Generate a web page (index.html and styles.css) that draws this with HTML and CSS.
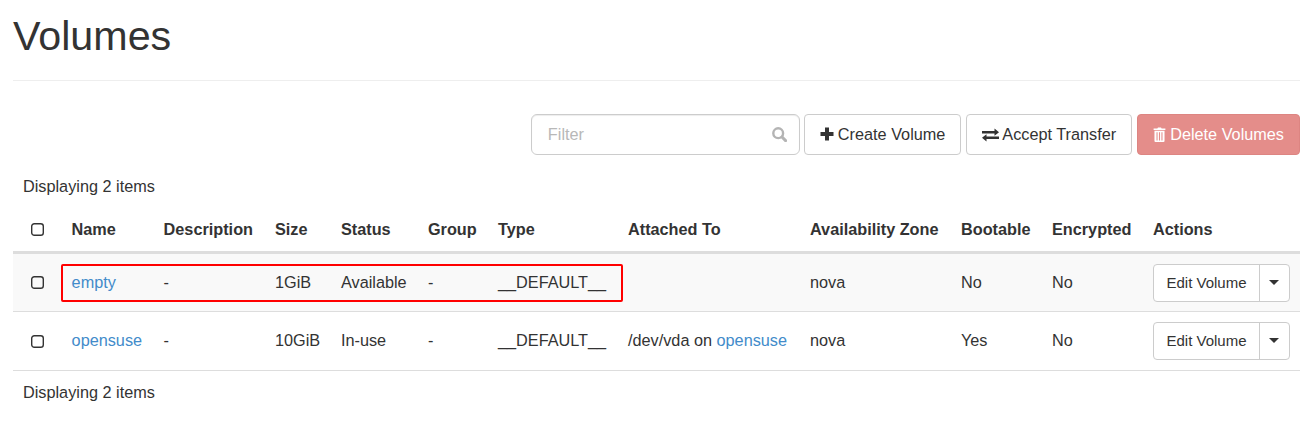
FILE: index.html
```html
<!DOCTYPE html>
<html lang="en">
<head>
<meta charset="utf-8">
<title>Volumes</title>
<link rel="stylesheet" href="styles.css">
</head>
<body>
<div class="page">
  <header class="page-header"><h1>Volumes</h1></header>
  <div class="toolbar">
    <div class="filter">
      <input class="filter-input" type="text" placeholder="Filter">
      <svg class="filter-icon" viewBox="0 0 15 15" width="15" height="15"><circle cx="6.2" cy="6.200" r="4.900" fill="none" stroke="#b4b4b4" stroke-width="2.400"/><path d="M10 10l3.600 3.600" stroke="#b4b4b4" stroke-width="3" stroke-linecap="round"/></svg>
    </div>
    <button class="btn"><svg class="ico ico-plus" viewBox="0 0 14 14" width="14" height="14"><path d="M5 .5h4v4.500h4.500v4H9v4.500H5V9H.5V5H5z" fill="#333"/></svg>Create Volume</button>
    <button class="btn"><svg class="ico ico-wide" viewBox="0 0 17 14" width="17" height="14"><path d="M0 2.900h12.500V.6L17 4.200 12.500 7.800V5.500H0zM17 8.500H4.500V6.200L0 9.800 4.500 13.400v-2.300H17z" fill="#333"/></svg>Accept Transfer</button>
    <button class="btn btn-danger"><svg class="ico" viewBox="0 0 12 14" width="13" height="15"><path d="M4 1.500 4.600.5h2.800L8 1.500h3.500v1.300H.5V1.500zM1.300 3.600h9.400V13a1 1 0 0 1-1 1H2.300a1 1 0 0 1-1-1zM3.200 5v7.500h1V5zm2.300 0v7.500h1V5zm2.300 0v7.500h1V5z" fill="#fff" fill-rule="evenodd"/></svg>Delete Volumes</button>
  </div>
  <div class="count count-top">Displaying 2 items</div>
  <table class="table">
    <colgroup>
      <col class="c-check"><col class="c-name"><col class="c-desc"><col class="c-size"><col class="c-status"><col class="c-group"><col class="c-type"><col class="c-att"><col class="c-az"><col class="c-boot"><col class="c-enc"><col class="c-act">
    </colgroup>
    <thead>
      <tr>
        <th class="check-cell"><svg class="checkbox" viewBox="0 0 13 13" width="13" height="13"><rect x=".7" y=".7" width="11.600" height="11.600" rx="2.600" fill="none" stroke="#333" stroke-width="1.400"/></svg></th>
        <th>Name</th><th>Description</th><th>Size</th><th>Status</th><th>Group</th><th>Type</th><th>Attached To</th><th>Availability Zone</th><th>Bootable</th><th>Encrypted</th><th>Actions</th>
      </tr>
    </thead>
    <tbody>
      <tr class="odd">
        <td class="check-cell"><svg class="checkbox" viewBox="0 0 13 13" width="13" height="13"><rect x=".7" y=".7" width="11.600" height="11.600" rx="2.600" fill="none" stroke="#333" stroke-width="1.400"/></svg></td>
        <td><a href="#">empty</a></td><td>-</td><td>1GiB</td><td>Available</td><td>-</td><td>__DEFAULT__</td><td></td><td>nova</td><td>No</td><td>No</td>
        <td><div class="split"><span class="split-main">Edit Volume</span><span class="split-caret"><i class="caret"></i></span></div></td>
      </tr>
      <tr class="even">
        <td class="check-cell"><svg class="checkbox" viewBox="0 0 13 13" width="13" height="13"><rect x=".7" y=".7" width="11.600" height="11.600" rx="2.600" fill="none" stroke="#333" stroke-width="1.400"/></svg></td>
        <td><a href="#">opensuse</a></td><td>-</td><td>10GiB</td><td>In-use</td><td>-</td><td>__DEFAULT__</td><td>/dev/vda on <a href="#">opensuse</a></td><td>nova</td><td>Yes</td><td>No</td>
        <td><div class="split"><span class="split-main">Edit Volume</span><span class="split-caret"><i class="caret"></i></span></div></td>
      </tr>
    </tbody>
  </table>
  <div class="count count-bottom">Displaying 2 items</div>
  <div class="highlight"></div>
</div>
</body>
</html>
```
FILE: styles.css
```css
* { box-sizing: border-box; }
html, body { margin: 0; padding: 0; background: #fff; }
body { font-family: "Liberation Sans", Arial, sans-serif; font-size: 16.25px; line-height: 1.42857; color: #333; overflow: hidden; }
.page { position: relative; padding: 0 11px 0 13px; height: 444px; }
.page-header { height: 81px; border-bottom: 1px solid #eee; padding-top: 14px; }
h1 { margin: 0; font-size: 41.25px; font-weight: 400; line-height: 45px; color: #333; }
.toolbar { display: flex; justify-content: flex-end; gap: 5px; margin-top: 33px; height: 41px; }
.filter { position: relative; width: 269px; margin-right: -1px; }
.filter-input { display: block; width: 100%; height: 41px; padding: 0 16px; border: 1px solid #ccc; border-radius: 6px; font: 16.25px "Liberation Sans", Arial, sans-serif; color: #333; box-shadow: inset 0 1px 1px rgba(0,0,0,.075); outline: none; }
.filter-input::placeholder { color: #b8b8b8; opacity: 1; }
.filter-icon { position: absolute; right: 13px; top: 13px; }
.btn { display: inline-flex; align-items: center; height: 41px; padding: 0 15px; border: 1px solid #ccc; border-radius: 4px; background: #fff; color: #333; font: 16.25px "Liberation Sans", Arial, sans-serif; white-space: nowrap; }
.ico { margin-right: 4px; flex: none; }
.ico-plus { margin-top: -1px; }
.ico-wide { margin-right: 3px; }
.btn-danger { background: #e48d8a; border-color: #dd8582; color: #fff; }
.count { padding-left: 10px; height: 23px; line-height: 23px; }
.count-top { margin-top: 20px; }
.count-bottom { margin-top: 10px; }
.table { width: 1287px; margin-top: 10px; border-collapse: separate; border-spacing: 0; table-layout: fixed; }
.c-check { width: 48.600px; } .c-name { width: 92px; } .c-desc { width: 111.400px; } .c-size { width: 66px; }
.c-status { width: 87px; } .c-group { width: 70px; } .c-type { width: 130px; } .c-att { width: 182px; }
.c-az { width: 151px; } .c-boot { width: 91px; } .c-enc { width: 101px; } .c-act { width: 157px; }
th { height: 46px; padding: 0 10px; text-align: left; font-weight: 700; border-bottom: 3px solid #ddd; white-space: nowrap; vertical-align: middle; }
td { height: 58px; padding: 0 10px; border-bottom: 1px solid #ddd; white-space: nowrap; vertical-align: middle; }
.even td { height: 59px; padding-bottom: 1px; }
.odd td { background: #f9f9f9; }
th.check-cell, td.check-cell { padding: 0 0 0 17.700px; }
.checkbox { display: block; }
a { color: #428bca; text-decoration: none; }
.split { display: flex; width: 137px; height: 38px; border: 1px solid #ccc; border-radius: 4px; background: #fff; font-size: 15px; }
.split-main { width: 106px; text-align: center; line-height: 36px; border-right: 1px solid #ccc; }
.split-caret { flex: 1; display: flex; align-items: center; justify-content: center; }
.caret { width: 0; height: 0; margin-top: -1px; border-top: 5px solid #333; border-left: 5px solid transparent; border-right: 5px solid transparent; }
.highlight { position: absolute; left: 61px; top: 264px; width: 562px; height: 38px; border: 2px solid #f00; border-radius: 2px; pointer-events: none; }
```
